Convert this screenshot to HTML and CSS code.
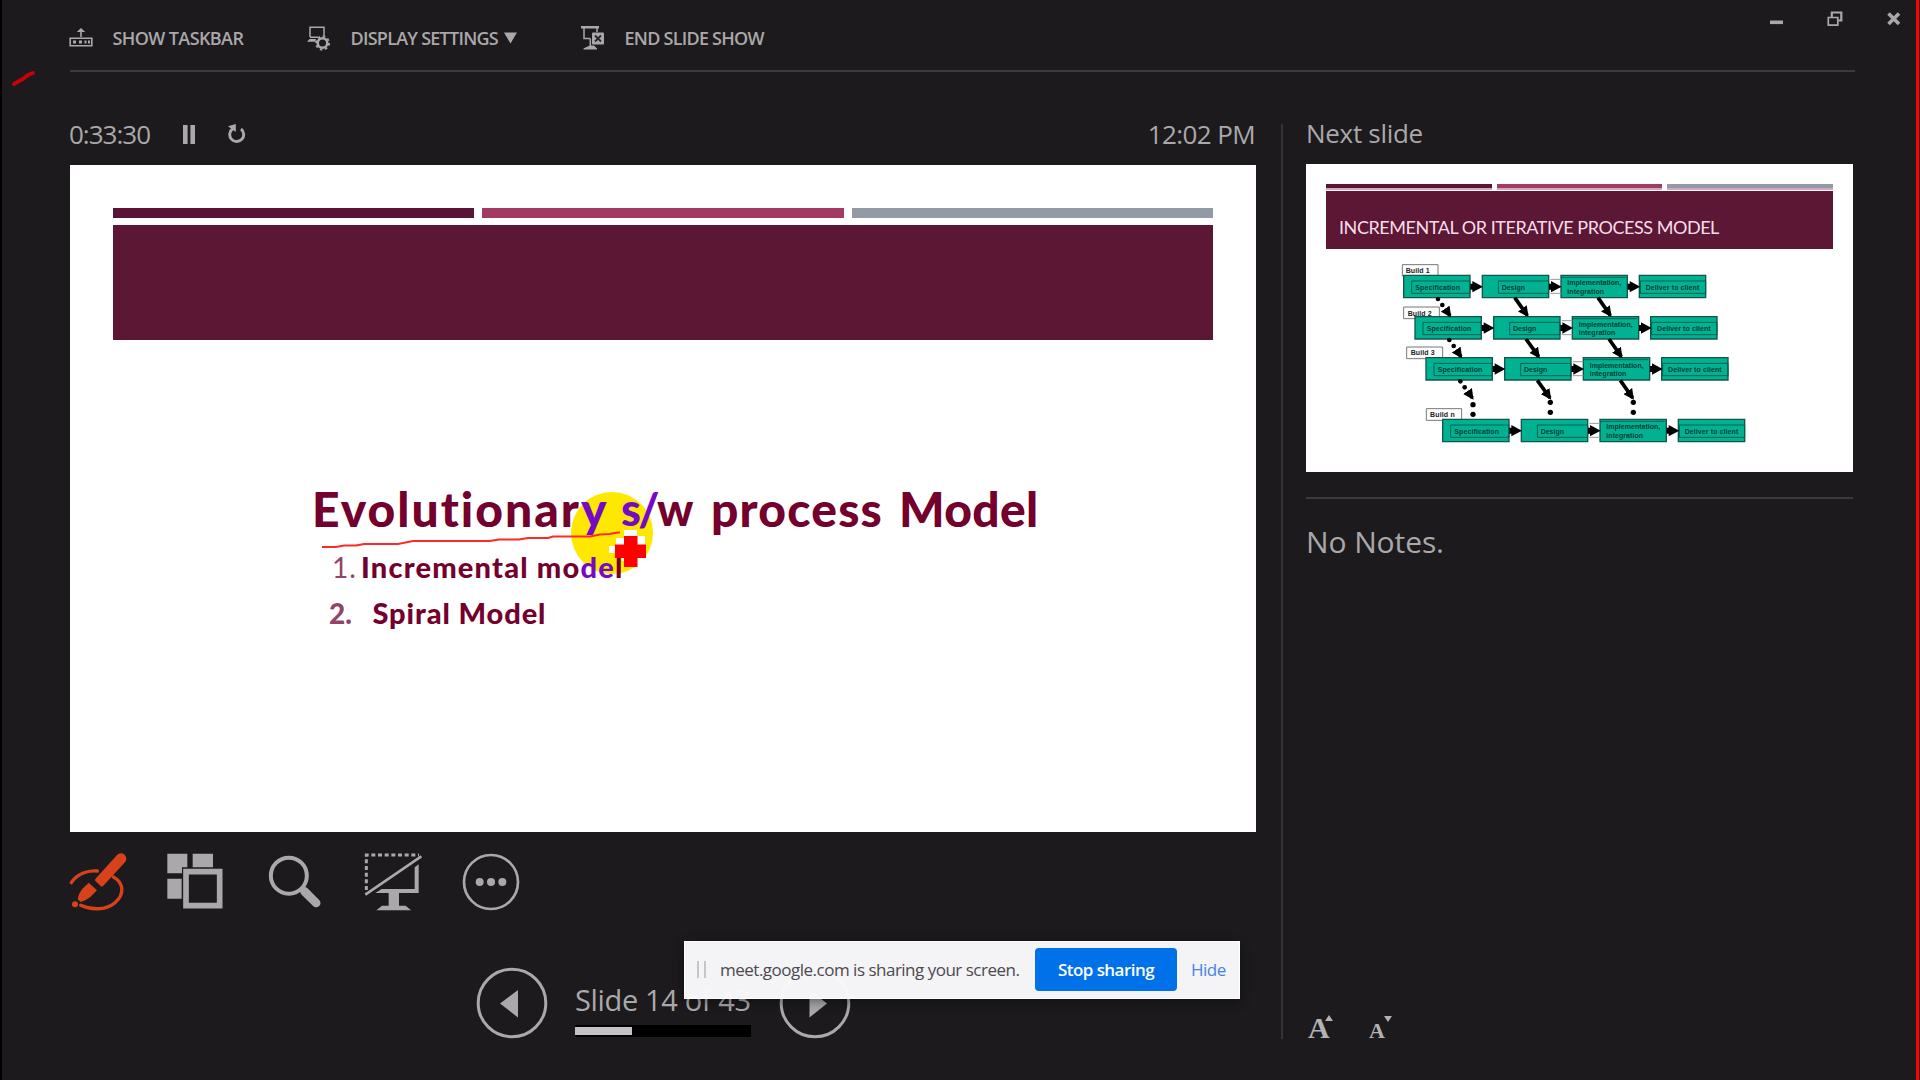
FILE: index.html
```html
<!DOCTYPE html>
<html lang="en">
<head>
<meta charset="utf-8">
<title>Presenter View</title>
<link rel="stylesheet" href="styles.css">
</head>
<body>
<div class="screen">
  <header class="topbar">
    <div class="command cmd-taskbar">
      <svg class="cmd-icon" viewBox="0 0 24 26"><path d="M1.2 13.2h21.6v7.6H1.2z" fill="none" stroke="currentColor" stroke-width="1.6"/><path d="M4 15.500h3v3H4zM10 15.500h3v3h-3zM15.500 15.500h2v3h-2zM19 15.500h2v3h-2zM11.200 12V7H7.800L12 3l4.200 4h-3.400v5z" fill="currentColor"/></svg>
      <span class="label">SHOW TASKBAR</span>
    </div>
    <div class="command cmd-display">
      <svg class="cmd-icon" viewBox="0 0 24 26"><path d="M3 12V2.200h14V11" fill="none" stroke="currentColor" stroke-width="1.500"/><path d="M3 11.500h8v1.500H3zM0 16.800L2.500 14H9l-1 2.800z" fill="currentColor"/><circle cx="15.500" cy="18" r="4.800" fill="none" stroke="currentColor" stroke-width="2.600"/><circle cx="15.500" cy="18" r="6.600" fill="none" stroke="currentColor" stroke-width="1.800" stroke-dasharray="2.600 2.584"/></svg>
      <span class="label">DISPLAY SETTINGS</span>
      <svg class="caret" viewBox="0 0 14 12"><path d="M0 0h14L7 12z" fill="currentColor"/></svg>
    </div>
    <div class="command cmd-end">
      <svg class="cmd-icon" viewBox="0 0 24 26"><path d="M0 1h18v2.600H0zM9 20.500h4l3 3v1H2.500v-1l3-1.500z" fill="currentColor"/><path d="M3 3v10.500h6M16 3v4M9.300 13.500v8" fill="none" stroke="currentColor" stroke-width="1.500"/><rect x="11" y="7.500" width="12" height="12" rx="1" fill="currentColor"/><path d="M14 10.500l6 6M20 10.500l-6 6" stroke="#29272a" stroke-width="1.800"/></svg>
      <span class="label">END SLIDE SHOW</span>
    </div>
    <div class="window-controls">
      <svg viewBox="0 0 16 16"><rect x="2" y="9.500" width="13" height="3.600" fill="currentColor"/></svg>
      <svg viewBox="0 0 16 16"><path d="M4.800 6V1.500h9.500v8h-3" fill="none" stroke="currentColor" stroke-width="2.200"/><path d="M1.300 6.500h9.500v7.700H1.300z" fill="none" stroke="currentColor" stroke-width="1.700"/></svg>
      <svg viewBox="0 0 16 16"><path d="M2.500 2.500l10.500 10.500M13 2.500L2.500 13" stroke="currentColor" stroke-width="3.600"/></svg>
    </div>
  </header>

  <main class="workspace">
    <section class="current">
      <div class="timebar">
        <span class="timer">0:33:30</span>
        <svg class="pause" viewBox="0 0 12 19"><path d="M0 0h4.600v19H0zM7.400 0H12v19H7.400z" fill="currentColor"/></svg>
        <svg class="restart" viewBox="0 0 18 20"><path d="M4.700 4.800A7 7 0 1 0 13 5" fill="none" stroke="currentColor" stroke-width="2.900"/><path d="M0 2.200L7.800 0v8z" fill="currentColor"/></svg>
        <span class="clock">12:02 PM</span>
      </div>

      <div class="slide">
        <div class="stripes"><i class="dark"></i><i class="rose"></i><i class="slate"></i></div>
        <div class="band"></div>
        <h1 class="slide-title"><span class="w1">Evolutionar<b>y</b></span><span class="w2"><b>s/</b>w</span><span class="w3">process</span><span class="w4">Model</span></h1>
        <ol class="models">
          <li><span class="num one">1.</span><span class="item-a">Incremental mo<b>de</b>l</span></li>
          <li><span class="num">2.</span><span class="item-b">Spiral Model</span></li>
        </ol>
        <div class="spotlight"></div>
        <svg class="ink" viewBox="0 0 300 24"><path d="M2 17h14l8-1.500h12l8-1.500h34l15-3h77l9-1.500h20l9-1.500h20l5-1.500h37l10-2 9-.500 9-1.500h4" fill="none" stroke="#ff2a25" stroke-width="2"/></svg>
        <svg class="pointer" viewBox="0 0 38 38"><path d="M16 0h13v6h8v8h1v22H21v-5h-7v-8H1v-7h7V8h8z" fill="#fff"/><path d="M16 6h13.500v8.500H38V28h-8.500v9H16v-9H7V14.500h9z" fill="#f00"/></svg>
      </div>

      <div class="tools">
        <svg class="pen" viewBox="27 69 174 174"><path d="M34 158C50 132 82 120 112 123M160 141C192 158 194 194 165 218C136 242 92 240 62 226" fill="none" stroke="currentColor" stroke-width="10" stroke-linecap="round"/><path d="M183 86L119 156" stroke="currentColor" stroke-width="32" stroke-linecap="round"/><path d="M100 147l26 25-9 9-28-26z" fill="#1c1a1d"/><path d="M86 158l25 23-20 20q-12 10-29 15l-9-8q3-18 13-30z" fill="currentColor"/><circle cx="45" cy="223" r="9" fill="currentColor"/></svg>
        <svg viewBox="322 69 174 174"><path d="M323 71h60v41h-16v18h-44zM399 71h61v41h-61zM323 146h43v60h-43z" fill="currentColor"/><path d="M379 125h101v102H379z" fill="none" stroke="currentColor" stroke-width="17"/></svg>
        <svg viewBox="616.500 69 174 174"><circle cx="685" cy="137" r="54" fill="none" stroke="currentColor" stroke-width="12"/><path d="M722 175l6 6" stroke="currentColor" stroke-width="16"/><path d="M732 184l35 35" stroke="currentColor" stroke-width="26" stroke-linecap="round"/></svg>
        <svg viewBox="911 69 174 174"><path d="M918 180V75H1076" fill="none" stroke="currentColor" stroke-width="9" stroke-dasharray="12 8"/><path d="M915 194L1083 79" stroke="currentColor" stroke-width="8"/><path d="M945 189l19-12h99v-65l12-9v86h-59v38h20l16 14H948l17-14h20v-38z" fill="currentColor"/></svg>
        <svg viewBox="1206 69 174 174"><circle cx="1293" cy="156" r="81" fill="none" stroke="currentColor" stroke-width="8"/><circle cx="1259" cy="156" r="12" fill="currentColor"/><circle cx="1293" cy="156" r="12" fill="currentColor"/><circle cx="1327" cy="156" r="12" fill="currentColor"/></svg>
      </div>

      <nav class="pager">
        <svg viewBox="0 0 72 72"><circle cx="36" cy="36" r="33.800" fill="none" stroke="currentColor" stroke-width="3"/><path d="M24 36.500L42 23v27.500z" fill="currentColor"/></svg>
        <div class="position">
          <span class="slide-count">Slide 14 of 43</span>
          <div class="progress"><i style="width:32.500%"></i></div>
        </div>
        <svg viewBox="0 0 72 72"><circle cx="36" cy="36" r="33.800" fill="none" stroke="currentColor" stroke-width="3"/><path d="M48 36.500L30.500 23v27.500z" fill="currentColor"/></svg>
      </nav>
    </section>

    <aside class="side">
      <h2 class="next-label">Next slide</h2>
      <div class="next-slide">
        <div class="stripes"><i class="dark"></i><i class="rose"></i><i class="slate"></i></div>
        <div class="band"><span class="next-title">INCREMENTAL OR ITERATIVE PROCESS MODEL</span></div>
        <svg class="diagram" viewBox="0 0 1140 630">
          <defs>
            <marker id="head" viewBox="0 0 10 10" refX="8" refY="5" markerWidth="32" markerHeight="32" markerUnits="userSpaceOnUse" orient="auto"><path d="M0 0l10 5-10 5z" fill="#000"/></marker>
            <g id="row">
              <g class="box"><path d="M0 0h199v67H0zM236 0h199v67H236zM472 0h199v67H472zM707 0h199v67H707z"/></g>
              <g class="inner"><path d="M24 17h175v37H24zM284 17h151v37H284zM472 6h194M710 17h196v37H710z"/></g>
              <path class="link" d="M440 12h32M440 54h32"/>
              <path d="M200 25h6V17l32 17-32 17v-8h-6zM436 25h6V17l32 17-32 17v-8h-6zM672 25h6V17l32 17-32 17v-8h-6z"/>
              <g class="names">
                <text x="35" y="43" textLength="134">Specification</text>
                <text x="294" y="43" textLength="70">Design</text>
                <text x="491" y="30" textLength="162">Implementation,</text>
                <text x="491" y="55" textLength="110">integration</text>
                <text x="726" y="43" textLength="161">Deliver to client</text>
              </g>
            </g>
          </defs>
          <g class="tag"><path d="M67 44h107v34H67zM71 171h107v35H71zM80 291h108v35H80zM139 476h106v35H139z"/>
            <text x="77" y="69" textLength="72">Build 1</text><text x="83" y="197" textLength="72">Build 2</text><text x="92" y="316" textLength="72">Build 3</text><text x="150" y="502" textLength="74">Build n</text></g>
          <use href="#row" x="71" y="76"/><use href="#row" x="105" y="200"/><use href="#row" x="138" y="323"/><use href="#row" x="188" y="508"/>
          <g class="flow"><path d="M404 143l38 53"/><path d="M654 143l37 53"/><path d="M438 267l38 53"/><path d="M687 267l37 53"/><path d="M472 391l38 53"/><path d="M721 391l37 53"/><path d="M199 181l11 16"/><path d="M232 304l11 16"/><path d="M266 428l11 16"/></g>
          <g><circle cx="174" cy="147" r="7"/><circle cx="187" cy="165" r="7"/><circle cx="208" cy="270" r="7"/><circle cx="221" cy="288" r="7"/><circle cx="241" cy="394" r="7"/><circle cx="254" cy="412" r="7"/><circle cx="279" cy="464" r="8"/><circle cx="279" cy="493" r="8"/><circle cx="511" cy="457" r="8"/><circle cx="511" cy="487" r="8"/><circle cx="760" cy="457" r="8"/><circle cx="760" cy="487" r="8"/></g>
        </svg>
      </div>
      <div class="notes">
        <p class="notes-text">No Notes.</p>
        <div class="font-size">
          <span class="grow">A<svg viewBox="0 0 8 6"><path d="M0 6l4-6 4 6z"/></svg></span>
          <span class="shrink">A<svg viewBox="0 0 8 6"><path d="M0 0h8l-4 6z"/></svg></span>
        </div>
      </div>
    </aside>
  </main>

  <div class="share-bar">
    <span class="grip"></span>
    <span class="share-text">meet.google.com is sharing your screen.</span>
    <button class="stop"><span>Stop sharing</span></button>
    <a class="hide">Hide</a>
  </div>
  <svg class="stray-ink" viewBox="0 0 28 18"><path d="M3 14l9-5 5-4 5-2" fill="none" stroke="#c80306" stroke-width="3.800" stroke-linecap="round"/></svg>
  <div class="share-edge"></div>
</div>
</body>
</html>
```
FILE: styles.css
```css
* { box-sizing: border-box; }
body { margin: 0; background: #1c1a1d; font-family: "Open Sans", "Noto Sans", sans-serif; color: #aaa8aa; }
svg { display: block; flex: none; }
h1, h2, p, ol { margin: 0; padding: 0; font-weight: 400; }
span { white-space: nowrap; }

.screen { position: relative; width: 1920px; height: 1080px; overflow: hidden; border-left: 2px solid #000; padding: 0 65px 0 68px; }

.topbar { height: 72px; border-bottom: 2px solid #3c3a3c; display: flex; align-items: flex-start; }
.command { display: flex; align-items: center; height: 24px; margin-top: 26px; }
.cmd-taskbar { width: 238px; }
.cmd-display { width: 274px; }
.cmd-icon { width: 24px; height: 26px; margin: 0 1px 0 -1px; }
.label { font-size: 18px; font-weight: 600; line-height: 24px; letter-spacing: -0.75px; margin-left: 18.5px; }
.cmd-taskbar .label { letter-spacing: -0.6px; }
.caret { width: 13px; height: 12px; margin-left: 6px; }
.window-controls { margin: 11px -47px 0 auto; display: flex; gap: 43px; }
.window-controls svg { width: 16px; height: 16px; }

.workspace { display: flex; }
.current { width: 1186px; }
.timebar { height: 93px; padding-top: 31px; display: flex; align-items: center; font-size: 26px; }
.timer { width: 113px; letter-spacing: -1px; margin-left: -1px; }
.pause { width: 12px; height: 19px; margin-left: 1px; }
.restart { width: 18px; height: 20px; margin-left: 33px; }
.clock { margin-left: auto; letter-spacing: -0.6px; margin-right: 1px; }

.slide { position: relative; height: 667px; background: #fff; padding: 43px 43px 0; isolation: isolate; color: #73002d; font-family: Lato, sans-serif; font-weight: 900; font-variant-ligatures: none; }
.stripes { display: grid; grid-template-columns: repeat(3, 1fr); gap: 8px; }
.stripes i { height: 10px; }
.dark { background: #5a1435; }
.rose { background: #a23a62; }
.slate { background: #929ba5; }
.band { background: #5b1733; height: 115px; margin-top: 7px; }
.slide b { font-weight: inherit; color: #7608c8; }
.slide-title { display: flex; font-size: 48px; font-weight: 900; line-height: 58px; margin: 140px 0 0 199px; }
.w1 { width: 309px; letter-spacing: 2px; }
.w2 { width: 90px; font-size: 45px; letter-spacing: -2.6px; }
.w3 { width: 188px; letter-spacing: 1.2px; }
.w4 { letter-spacing: 0.3px; }
.models { list-style: none; margin: 6px 0 0 216px; font-size: 29px; line-height: 46px; font-weight: 900; }
.models li { display: flex; }
.item-a { letter-spacing: 1.2px; }
.item-b { letter-spacing: 0.9px; }
.num { width: 43.5px; color: #914467; font-size: 28px; }
.num.one { width: 32px; margin-left: 3px; margin-right: -3px; font-weight: 400; letter-spacing: 1px; }
.spotlight { position: absolute; z-index: -1; left: 501px; top: 327px; width: 82px; height: 82px; border-radius: 50%; background: #ffe800; }
.ink { position: absolute; left: 250px; top: 365px; width: 300px; height: 24px; }
.pointer { position: absolute; left: 538px; top: 365px; width: 38px; height: 38px; }

.tools { display: flex; gap: 40.25px; padding: 21px 0 0 0; margin-left: -1px; }
.tools svg { width: 58px; height: 58px; }
.pen { color: #d8421b; }

.pager { display: flex; margin: 56px 0 0 406px; align-items: flex-start; }
.pager svg { width: 72px; height: 72px; }
.position { width: 176px; margin: 0 28px 0 27px; }
.slide-count { display: block; font-size: 29px; line-height: 40px; padding-top: 13px; height: 58px; letter-spacing: -0.35px; }
.progress { height: 12px; background: #000; padding: 2px 0; }
.progress i { display: block; height: 8px; background: #c4c2c4; }

.side { width: 572px; margin: 52px 0 0 25px; height: 915px; border-left: 2px solid #353336; padding-left: 23px; display: flex; flex-direction: column; }
.next-label { font-size: 26px; line-height: 36px; height: 41px; margin-top: -9px; letter-spacing: -0.3px; }
.next-slide { height: 308px; margin-top: 8px; background: #fff; padding: 20px 20px 0; }
.next-slide .stripes { gap: 5px; }
.next-slide .stripes i { height: 6px; border-bottom: 2px solid #d5a6bd; }
.next-slide .slate { border: 0; }
.next-slide .band { height: 58px; margin-top: 1px; padding: 23px 0 0 13px; }
.next-title { display: block; font: 400 18px/26px Lato, sans-serif; letter-spacing: -0.45px; color: #f8deeb; }
.diagram { width: 380px; height: 210px; margin: 1px 0 0 54px; }
.box { fill: #00b292; stroke: #12564b; stroke-width: 4; }
.inner { fill: none; stroke: #065e50; stroke-width: 3; }
.link { stroke: #999; stroke-width: 3; }
.names { fill: #013e35; font: 700 21px "Liberation Sans", sans-serif; }
.tag path { fill: #fff; stroke: #777; stroke-width: 3; }
.tag text { fill: #222; font: 700 21px "Liberation Sans", sans-serif; }
.flow { fill: none; stroke: #000; stroke-width: 11; }
.flow path { marker-end: url(#head); }
.notes { flex: 1; border-top: 2px solid #3c3a3c; margin-top: 25px; padding-top: 22px; display: flex; flex-direction: column; }
.notes-text { font-size: 30px; line-height: 42px; letter-spacing: -0.1px; }
.font-size { display: flex; align-items: baseline; gap: 39px; margin: auto 0 -9px 2px; color: #b3b1b3; font: 700 30px/34px "Liberation Serif", serif; }
.font-size span { position: relative; width: 22px; }
.font-size .shrink { font-size: 22px; }
.font-size svg { position: absolute; width: 8px; height: 6px; right: -3px; top: 4px; fill: currentColor; }
.font-size .shrink svg { right: -1px; top: 2px; }

.share-bar { position: absolute; left: 682px; top: 941px; width: 556px; height: 58px; background: rgba(248, 247, 250, 0.985); display: flex; align-items: center; padding: 0 0 2px 12px; box-shadow: 0 3px 10px rgba(0, 0, 0, 0.4); border: 1px solid #fff; color: #4b4a50; font-size: 17px; }
.grip { width: 9px; height: 17px; border: solid #c6c5c8; border-width: 0 2px; }
.share-text { width: 315px; margin-left: 14px; letter-spacing: -0.5px; }
.stop { width: 142px; height: 43px; border: 0; border-radius: 4px; background: #0071e8; color: #fff; font: 600 17px "Open Sans", sans-serif; padding: 0; letter-spacing: -0.55px; }
.hide { margin-left: 14px; color: #4384e5; letter-spacing: -0.5px; }
.stray-ink { position: absolute; left: 9px; top: 70px; width: 28px; height: 18px; }
.share-edge { position: absolute; top: 0; right: 1px; width: 3px; height: 1080px; background: #f00; }
```
